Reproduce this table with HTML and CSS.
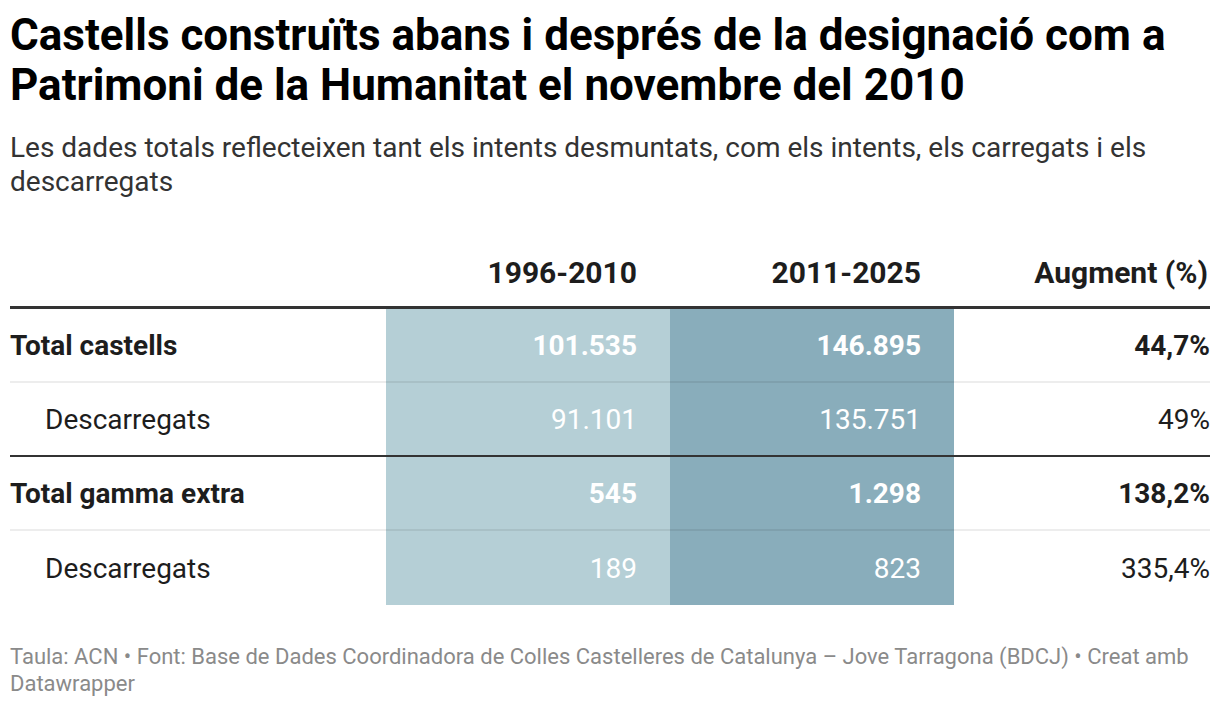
FILE: index.html
```html
<!DOCTYPE html>
<html lang="ca">
<head>
<meta charset="utf-8">
<title>Castells construïts</title>
<link rel="stylesheet" href="styles.css">
</head>
<body>
<div class="chart">
  <h1 class="title">Castells construïts abans i després de la designació com a Patrimoni de la Humanitat el novembre del 2010</h1>
  <p class="subtitle">Les dades totals reflecteixen tant els intents desmuntats, com els intents, els carregats i els descarregats</p>
  <table class="data">
    <colgroup>
      <col class="c-label">
      <col class="c-a">
      <col class="c-b">
      <col class="c-c">
    </colgroup>
    <thead>
      <tr>
        <th></th>
        <th class="num">1996-2010</th>
        <th class="num">2011-2025</th>
        <th class="num last">Augment (%)</th>
      </tr>
    </thead>
    <tbody>
      <tr class="total">
        <td class="label">Total castells</td>
        <td class="num a">101.535</td>
        <td class="num b">146.895</td>
        <td class="num last">44,7%</td>
      </tr>
      <tr class="sub group-end">
        <td class="label">Descarregats</td>
        <td class="num a">91.101</td>
        <td class="num b">135.751</td>
        <td class="num last">49%</td>
      </tr>
      <tr class="total">
        <td class="label">Total gamma extra</td>
        <td class="num a">545</td>
        <td class="num b">1.298</td>
        <td class="num last">138,2%</td>
      </tr>
      <tr class="sub final">
        <td class="label">Descarregats</td>
        <td class="num a">189</td>
        <td class="num b">823</td>
        <td class="num last">335,4%</td>
      </tr>
    </tbody>
  </table>
  <p class="footer">Taula: ACN • Font: Base de Dades Coordinadora de Colles Castelleres de Catalunya – Jove Tarragona (BDCJ) • Creat amb Datawrapper</p>
</div>
</body>
</html>
```

FILE: styles.css
```css
html, body {
  margin: 0;
  padding: 0;
  background: #ffffff;
}

body {
  font-family: Roboto, "Liberation Sans", sans-serif;
  color: #1d1d1d;
}

.chart {
  padding: 10px 10px 0 10px;
}

.title {
  margin: 0;
  font-size: 44px;
  line-height: 50px;
  font-weight: 700;
  color: #000;
}

.subtitle {
  margin: 21px 0 0 0;
  font-size: 28px;
  line-height: 34px;
  font-weight: 400;
  color: #333;
}

.data {
  margin-top: 39px;
  width: 1200px;
  border-collapse: collapse;
  table-layout: fixed;
}

.c-label { width: 376px; }
.c-a { width: 284px; }
.c-b { width: 284px; }
.c-c { width: 256px; }

.data th {
  font-size: 30px;
  font-weight: 700;
  color: #1d1d1d;
  height: 68px;
  padding: 0 33px 0 0;
  vertical-align: middle;
  border-bottom: 3px solid #333;
}

.data th.last {
  padding-right: 2px;
}

.data td.last {
  padding-right: 0;
}

.data td {
  font-size: 28px;
  height: 72px;
  padding: 0 33px 0 0;
  vertical-align: middle;
  border-bottom: 2px solid rgba(0, 0, 0, 0.07);
  color: #1d1d1d;
}

.num {
  text-align: right;
}

.data td.a {
  background: #b5cfd6;
  color: #fff;
}

.data td.b {
  background: #89adbb;
  color: #fff;
}

.total td {
  font-weight: 700;
}

.sub td.label {
  padding-left: 35px;
}

.group-end td {
  border-bottom: 2px solid #333;
}

.final td {
  border-bottom: none;
  height: 74px;
}

.footer {
  margin: 38px 0 0 0;
  font-size: 22px;
  line-height: 27px;
  color: #8a8a8a;
}
```
